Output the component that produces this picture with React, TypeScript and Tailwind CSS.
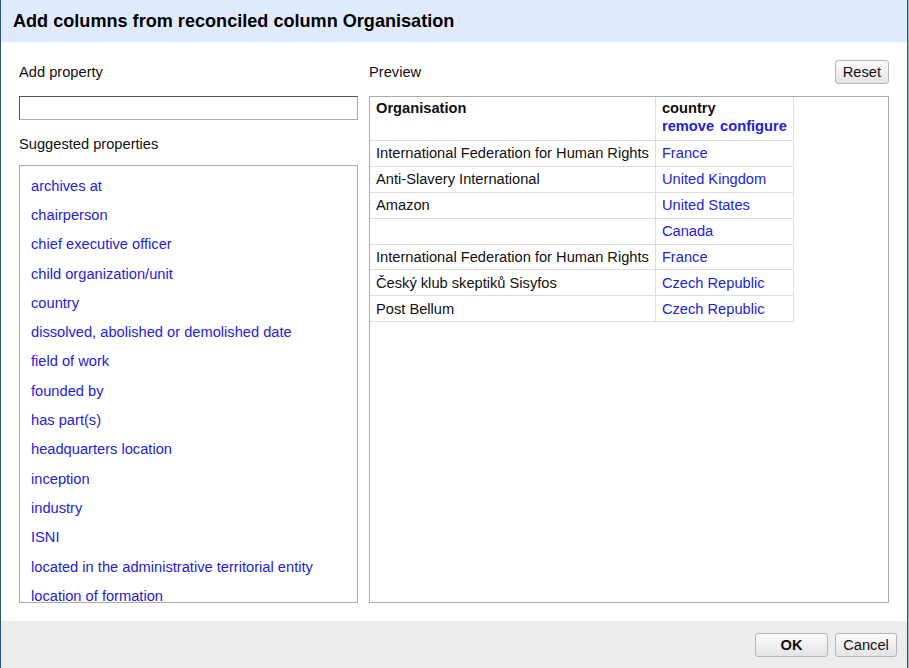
import React from "react";

const props = [
  "archives at",
  "chairperson",
  "chief executive officer",
  "child organization/unit",
  "country",
  "dissolved, abolished or demolished date",
  "field of work",
  "founded by",
  "has part(s)",
  "headquarters location",
  "inception",
  "industry",
  "ISNI",
  "located in the administrative territorial entity",
  "location of formation",
];

const rows: [string, string][] = [
  ["International Federation for Human Rights", "France"],
  ["Anti-Slavery International", "United Kingdom"],
  ["Amazon", "United States"],
  ["", "Canada"],
  ["International Federation for Human Rights", "France"],
  ["Český klub skeptiků Sisyfos", "Czech Republic"],
  ["Post Bellum", "Czech Republic"],
];

export default function App() {
  return (
    <div
      className="flex w-[909px] h-[668px] bg-[#9fb2c4] text-[14.67px] text-[#111]"
      style={{ fontFamily: '"Liberation Sans", Arial, sans-serif' }}
    >
      <div className="flex flex-col w-[908px] h-full border-l border-r border-[#2f5479] bg-white">
        {/* header */}
        <div className="h-[42px] shrink-0 bg-[#dfebfc] flex items-center pl-[12px] pt-[1px]">
          <span className="text-[18.1px] font-bold text-black">
            Add columns from reconciled column Organisation
          </span>
        </div>
        {/* body */}
        <div className="flex-1 flex pl-[18px] pr-[18px] pt-[14px]">
          {/* left */}
          <div className="w-[339px] flex flex-col">
            <div className="h-[32px] flex items-center">Add property</div>
            <input className="mt-[8px] h-[24px] w-[339px] border border-t-[#555] border-l-[#555] border-r-[#aaa] border-b-[#aaa] outline-none" />
            <div className="h-[22px] mt-[13px] flex items-center">Suggested properties</div>
            <div className="mt-[10px] h-[438px] border border-[#aaa] overflow-hidden pl-[11px] pt-[5px]">
              {props.map((p) => (
                <div key={p} className="h-[29.3px] flex items-center text-[#2222dd] whitespace-nowrap">
                  {p}
                </div>
              ))}
            </div>
          </div>
          {/* right */}
          <div className="ml-[11px] flex-1 flex flex-col">
            <div className="h-[32px] flex items-center justify-between">
              <span>Preview</span>
              <button className="h-[24px] px-[7px] rounded-[3px] border border-[#b5b5b5] bg-gradient-to-b from-[#fbfbfb] to-[#e4e4e4] text-[14.67px] text-[#111]">
                Reset
              </button>
            </div>
            <div className="mt-[8px] h-[507px] border border-[#aaa] overflow-hidden">
              <table className="border-collapse">
                <tbody>
                  <tr>
                    <td className="align-top border border-t-0 border-l-0 border-[#ddd] pl-[6px] pr-[6px] pt-[2px] pb-[5px] font-bold leading-[18px]">
                      Organisation
                    </td>
                    <td className="align-top border border-t-0 border-[#ddd] pl-[6px] pr-[6px] pt-[2px] pb-[5px] font-bold leading-[18px]">
                      <div>country</div>
                      <div className="text-[#2222dd] whitespace-nowrap">
                        remove<span className="ml-[6px]">configure</span>
                      </div>
                    </td>
                  </tr>
                  {rows.map(([a, b], i) => (
                    <tr key={i} className="h-[25.9px]">
                      <td className="border border-l-0 border-[#ddd] pl-[6px] pr-[6px] py-0 leading-[18px] whitespace-nowrap">
                        {a}
                      </td>
                      <td className="border border-[#ddd] pl-[6px] pr-[6px] py-0 leading-[18px] text-[#2222dd] whitespace-nowrap">
                        {b}
                      </td>
                    </tr>
                  ))}
                </tbody>
              </table>
            </div>
          </div>
        </div>
        {/* footer */}
        <div className="h-[47px] shrink-0 bg-[#ececec] flex items-center justify-end pr-[10px] gap-[7px] pt-[1px]">
          <button className="h-[24px] w-[73px] rounded-[3px] border border-[#b5b5b5] bg-gradient-to-b from-[#fbfbfb] to-[#e4e4e4] font-bold text-[14.67px] text-[#111]">
            OK
          </button>
          <button className="h-[24px] w-[62px] rounded-[3px] border border-[#b5b5b5] bg-gradient-to-b from-[#fbfbfb] to-[#e4e4e4] text-[14.67px] text-[#111]">
            Cancel
          </button>
        </div>
      </div>
    </div>
  );
}
